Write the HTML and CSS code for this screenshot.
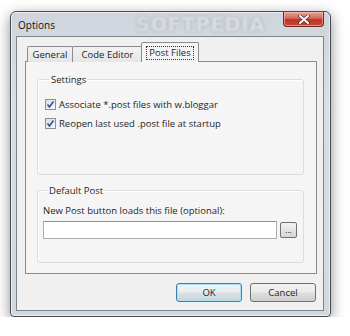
FILE: index.html
```html
<!DOCTYPE html>
<html lang="en">
<head>
    <meta charset="UTF-8">
    <meta name="viewport" content="width=device-width, initial-scale=1.0">
    <link rel="stylesheet" href="styles.css">
</head>
<body>
    <div class="window">
        <div class="titlebar">
            <span class="title">Options</span>
            <span class="watermark">SOFTPEDIA</span>
            <button class="close">
                <svg width="12" height="9" viewBox="0 0 12 9">
                    <path d="M2 1 L10 8 M10 1 L2 8" stroke="#4a2a2a" stroke-width="3.4" stroke-linecap="round"/>
                    <path d="M2 1 L10 8 M10 1 L2 8" stroke="#fff" stroke-width="2" stroke-linecap="round"/>
                </svg>
            </button>
        </div>
        <div class="client">
            <div class="tabs">
                <div class="tab general">General</div>
                <div class="tab editor">Code Editor</div>
                <div class="tab active"><span class="focus">Post Files</span></div>
            </div>
            <div class="panel">
                <fieldset class="group settings">
                    <legend>Settings</legend>
                    <label class="check">
                        <span class="box">
                            <svg width="9" height="9" viewBox="0 0 9 9">
                                <path d="M1.5 4.5 L3.5 7 L7.5 1.5" fill="none" stroke="#2a4f9e" stroke-width="1.6"/>
                            </svg>
                        </span>
                        Associate *.post files with w.bloggar
                    </label>
                    <label class="check">
                        <span class="box">
                            <svg width="9" height="9" viewBox="0 0 9 9">
                                <path d="M1.5 4.5 L3.5 7 L7.5 1.5" fill="none" stroke="#2a4f9e" stroke-width="1.6"/>
                            </svg>
                        </span>
                        Reopen last used .post file at startup
                    </label>
                </fieldset>
                <fieldset class="group default">
                    <legend>Default Post</legend>
                    <div class="hint">New Post button loads this file (optional):</div>
                    <div class="file-row">
                        <input type="text" class="path">
                        <button class="browse">...</button>
                    </div>
                </fieldset>
            </div>
            <div class="actions">
                <button class="btn ok">OK</button>
                <button class="btn">Cancel</button>
            </div>
        </div>
    </div>
</body>
</html>
```

FILE: styles.css
```css
* {
    margin: 0;
    padding: 0;
    box-sizing: border-box;
}

body {
    background-color: #fff;
    font-family: "Open Sans", "DejaVu Sans", sans-serif;
    font-size: 9.5px;
    color: #1e1e1e;
}

.window {
    margin: 11px 0 0 10px;
    width: 321px;
    height: 306px;
    border: 1px solid #454a50;
    border-radius: 6px 6px 4px 4px;
    padding: 0 6px 5px 5px;
    background: linear-gradient(to bottom, #cfd5dc 0%, #d9dee4 30%, #d3d8de 100%);
    box-shadow: 0 4px 14px rgba(0, 0, 0, 0.45), inset 0 0 0 1px rgba(255, 255, 255, 0.6);
}

.titlebar {
    position: relative;
    height: 24px;
    display: flex;
    justify-content: space-between;
    align-items: flex-start;
}

.title {
    padding: 6px 0 0 2px;
    font-size: 10px;
    color: #111;
}

.watermark {
    position: absolute;
    left: 120px;
    top: 1px;
    font-family: "DejaVu Sans", sans-serif;
    font-weight: bold;
    font-size: 19px;
    letter-spacing: 1px;
    color: rgba(235, 238, 242, 0.8);
    text-shadow: 0 0 3px rgba(90, 95, 105, 0.5);
    filter: blur(1px);
}

.close {
    width: 41px;
    height: 15px;
    border: 1px solid #6b2a24;
    border-top: none;
    border-radius: 0 0 4px 4px;
    background: linear-gradient(to bottom, #e8a296 0%, #d2685a 45%, #bb3222 55%, #c94a36 100%);
    display: flex;
    align-items: center;
    justify-content: center;
    box-shadow: inset 0 0 0 1px rgba(255, 210, 200, 0.5);
}

.client {
    height: 275px;
    border: 1px solid #7b8590;
    background-color: #f0f0f0;
    padding: 6px 6px 0 8px;
    display: flex;
    flex-direction: column;
}

.tabs {
    display: flex;
    height: 19px;
    padding-left: 2px;
    align-items: flex-end;
    position: relative;
    z-index: 1;
    margin-bottom: -1px;
}

.tab {
    height: 16px;
    border: 1px solid #898c95;
    border-bottom: none;
    background: linear-gradient(to bottom, #f2f2f2, #e6e6e6);
    display: flex;
    align-items: center;
    justify-content: center;
    margin-right: -1px;
    border-radius: 2px 2px 0 0;
}

.general {
    width: 46px;
}

.editor {
    width: 71px;
}

.tab.active {
    width: 58px;
    height: 20px;
    margin-left: -1px;
    background: #f5f5f5;
    position: relative;
}

.focus {
    border: 1px dotted #333;
    padding: 0 2px;
    line-height: 12px;
}

.panel {
    height: 213px;
    width: 292px;
    border: 1px solid #898c95;
    background-color: #f5f5f5;
    padding: 11px 12px 0 11px;
    display: flex;
    flex-direction: column;
}

.group {
    border: 1px solid #d5dfe5;
    border-radius: 3px;
    box-shadow: inset 1px 1px 0 #fff;
    padding: 0 0 0 7px;
}

.group legend {
    margin-left: 4px;
    padding: 0 2px;
    line-height: 13px;
}

.settings {
    height: 102px;
    padding-top: 12px;
}

.default {
    height: 79px;
    margin-top: 9px;
    padding-top: 7px;
    padding-left: 5px;
}

.check {
    display: flex;
    align-items: center;
    height: 13px;
    margin-bottom: 6px;
}

.box {
    width: 11px;
    height: 11px;
    border: 1px solid #8e8f8f;
    background: linear-gradient(135deg, #dcdcdc, #fbfbfb);
    display: flex;
    align-items: center;
    justify-content: center;
    margin-right: 3px;
}

.hint {
    line-height: 13px;
}

.file-row {
    display: flex;
    align-items: center;
    gap: 3px;
    margin-top: 4px;
}

.path {
    width: 234px;
    height: 18px;
    border: 1px solid #abadb3;
    border-top-color: #8f9297;
    background-color: #fff;
}

.browse {
    width: 17px;
    height: 16px;
    border: 1px solid #707070;
    border-radius: 2px;
    background: linear-gradient(to bottom, #f2f2f2, #d6d6d6);
    font-family: inherit;
    font-size: 8px;
    line-height: 8px;
}

.actions {
    display: flex;
    justify-content: flex-end;
    gap: 8px;
    margin-top: 9px;
    padding-right: 1px;
}

.btn {
    width: 66px;
    height: 19px;
    border: 1px solid #707070;
    border-radius: 3px;
    background: linear-gradient(to bottom, #f2f2f2 0%, #ebebeb 45%, #dddddd 55%, #cfcfcf 100%);
    font-family: inherit;
    font-size: 9.5px;
    color: #1e1e1e;
}

.ok {
    border-color: #3c7fb1;
    box-shadow: inset 0 0 0 1px #a8e0f8;
    background: linear-gradient(to bottom, #f0f4f6 0%, #e8edf0 45%, #d9dfe2 55%, #cdd4d8 100%);
}
```
